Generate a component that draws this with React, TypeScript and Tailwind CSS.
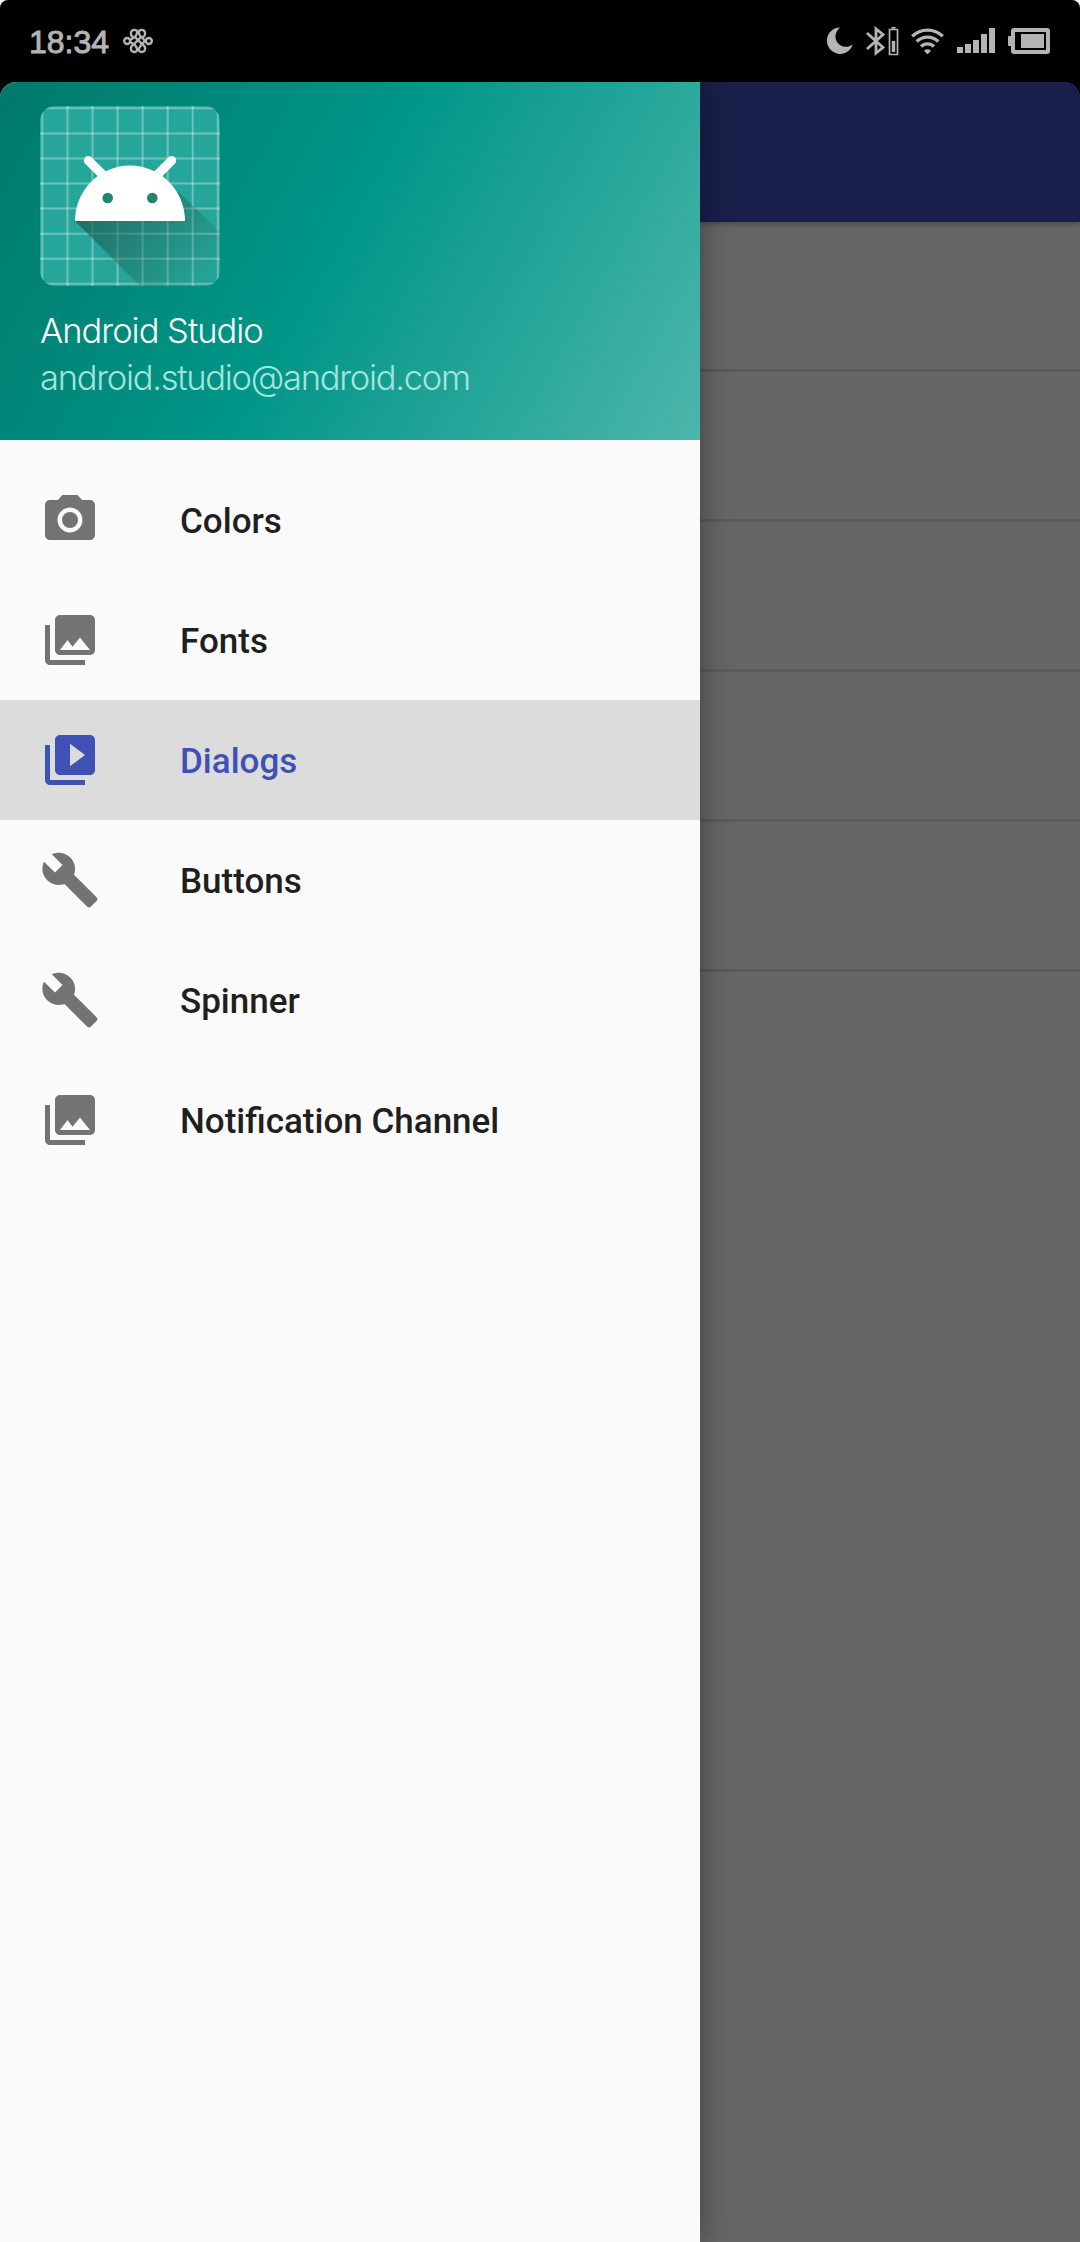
import React from "react";

type IconProps = { className?: string };

function Camera({ className }: IconProps) {
  return (
    <svg viewBox="0 0 24 24" fill="currentColor" className={className}>
      <circle cx="12" cy="12" r="3.2" />
      <path d="M9 2L7.170 4H4c-1.100 0-2 .9-2 2v12c0 1.100.9 2 2 2h16c1.100 0 2-.9 2-2V6c0-1.100-.9-2-2-2h-3.170L15 2H9zm3 15c-2.760 0-5-2.240-5-5s2.240-5 5-5 5 2.240 5 5-2.240 5-5 5z" />
    </svg>
  );
}

function Gallery({ className }: IconProps) {
  return (
    <svg viewBox="0 0 24 24" fill="currentColor" className={className}>
      <path d="M22 16V4c0-1.100-.9-2-2-2H8c-1.100 0-2 .9-2 2v12c0 1.100.9 2 2 2h12c1.100 0 2-.9 2-2zm-11-4l2.030 2.710L16 11l4 5H8l3-4zM2 6v14c0 1.100.9 2 2 2h14v-2H4V6H2z" />
    </svg>
  );
}

function Slideshow({ className }: IconProps) {
  return (
    <svg viewBox="0 0 24 24" fill="currentColor" className={className}>
      <path d="M4 6H2v14c0 1.100.9 2 2 2h14v-2H4V6zm16-4H8c-1.100 0-2 .9-2 2v12c0 1.100.9 2 2 2h12c1.100 0 2-.9 2-2V4c0-1.100-.9-2-2-2zm-8 12.500v-9l6 4.500-6 4.500z" />
    </svg>
  );
}

function Wrench({ className }: IconProps) {
  return (
    <svg viewBox="0 0 24 24" fill="currentColor" className={className}>
      <path d="M22.700 19l-9.100-9.100c.9-2.300.4-5-1.500-6.900-2-2-5-2.400-7.400-1.300L9 6 6 9 1.600 4.700C.4 7.100.9 10.100 2.900 12.100c1.900 1.900 4.600 2.400 6.900 1.500l9.100 9.100c.4.4 1 .4 1.400 0l2.300-2.300c.5-.4.5-1.100.1-1.400z" />
    </svg>
  );
}

function StatusBar() {
  return (
    <header className="flex h-[82px] shrink-0 items-center rounded-t-[8px] bg-black pl-[29px] pr-[30px] text-[#b4b4b4]">
      <span className="w-[94px] whitespace-nowrap pt-[2px] font-['Liberation_Sans',sans-serif] text-[32px] leading-none [-webkit-text-stroke:0.9px_#b4b4b4]">
        18:34
      </span>
      <svg width="30" height="26" viewBox="0 0 30 26" fill="none" stroke="currentColor" strokeWidth="2.400">
        <circle cx="4.200" cy="13" r="3" />
        <circle cx="25.800" cy="13" r="3" />
        <path d="M7 12L11 9.500C8.500 8.500 7.500 7 8 4.500C8.800 1 13.800 1.200 14.200 4C14.400 6 13 7.500 12 9L19 16C21.500 17.500 22.500 19 22 21.500C21 25 16 24.500 15.800 21.500C15.800 19.500 17.500 18 18.500 16.500L23 12" />
        <path d="M23 14L19 9.500C21.500 8.500 22.500 7 22 4.500C21.200 1 16.200 1.200 15.800 4C15.600 6 17 7.500 18 9L11 16C8.500 17.500 7.500 19 8 21.500C9 25 14 24.500 14.200 21.500C14.200 19.500 12.500 18 11.500 16.500L7 14" />
      </svg>
      <div className="ml-auto flex items-center">
        <svg width="27" height="28" viewBox="0 0 27 28" fill="currentColor" className="mr-[12px]">
          <path d="M14 0.500A13.200 13.200 0 1 0 26.700 17.500C21 21.500 14 20 11 15C8 10 9.500 4.500 14 0.500Z" />
        </svg>
        <svg width="34" height="30" viewBox="0 0 34 30" fill="none" stroke="currentColor" className="mr-[12px]">
          <path d="M2 7L18 21.500L11 27V3L18 8.500L2 23" strokeWidth="2.800" />
          <path d="M24.500 3.500H32.500V28.500H24.500Z" strokeWidth="1.700" />
          <path d="M26.500 1.800H30.500" strokeWidth="1.800" />
          <path d="M28.500 15V26" strokeWidth="3.400" />
        </svg>
        <svg width="33" height="27" viewBox="0 0 33 27" fill="none" stroke="currentColor" strokeWidth="3.300" className="mr-[13px]">
          <path d="M1.200 8.300A22 22 0 0 1 31.800 8.300" />
          <path d="M5.700 13.500A15.500 15.500 0 0 1 27.300 13.500" />
          <path d="M10 18.500A9.300 9.300 0 0 1 23 18.500" />
          <path d="M13 22.800A5 5 0 0 1 20 22.800L16.500 26.500Z" fill="currentColor" stroke="none" />
        </svg>
        <svg width="38" height="26" viewBox="0 0 38 26" fill="currentColor" className="mr-[13px]">
          <rect x="0" y="19" width="6" height="6" />
          <rect x="8" y="16" width="6" height="9" />
          <rect x="16" y="12" width="6" height="13" />
          <rect x="24" y="6" width="6" height="19" />
          <rect x="32" y="0" width="6" height="25" />
        </svg>
        <svg width="42" height="26" viewBox="0 0 42 26">
          <rect x="5" y="2" width="35" height="22" rx="1" fill="none" stroke="currentColor" strokeWidth="4" />
          <rect x="0" y="8" width="5" height="10" rx="1" fill="currentColor" />
          <rect x="13" y="6" width="23" height="14" fill="currentColor" />
        </svg>
      </div>
    </header>
  );
}

const gridX = [2.3, 27.5, 52.5, 77.6, 102.6, 127.7, 152.7, 177.8];

function AndroidLogo() {
  return (
    <svg width="180" height="180" viewBox="0 0 180 180" className="block">
      <defs>
        <clipPath id="tile">
          <rect width="180" height="180" rx="15" />
        </clipPath>
        <linearGradient id="cast" gradientUnits="userSpaceOnUse" x1="55" y1="85" x2="160" y2="178">
          <stop offset="0" stopColor="#1c5a50" stopOpacity="0.75" />
          <stop offset="1" stopColor="#1c5a50" stopOpacity="0.05" />
        </linearGradient>
      </defs>
      <g clipPath="url(#tile)">
        <rect width="180" height="180" fill="#26a69a" />
        <g stroke="#ffffff" strokeOpacity="0.33" strokeWidth="2">
          {gridX.map((v) => (
            <React.Fragment key={v}>
              <path d={`M${v} 0V180`} />
              <path d={`M0 ${v}H180`} />
            </React.Fragment>
          ))}
        </g>
        <path d="M35 115L100 180H180V126L139 86Z" fill="url(#cast)" />
      </g>
      <path d="M35 115A55 55.500 0 0 1 145 115Z" fill="#ffffff" />
      <path d="M48.300 54.500L66 72M131.700 54.500L114 72" stroke="#ffffff" strokeWidth="9" strokeLinecap="round" />
      <circle cx="67.700" cy="92" r="5.300" fill="#26836f" />
      <circle cx="112.300" cy="92" r="5.300" fill="#26836f" />
    </svg>
  );
}

const items = [
  { label: "Colors", Icon: Camera },
  { label: "Fonts", Icon: Gallery },
  { label: "Dialogs", Icon: Slideshow, selected: true },
  { label: "Buttons", Icon: Wrench },
  { label: "Spinner", Icon: Wrench },
  { label: "Notification Channel", Icon: Gallery },
];

function Drawer() {
  return (
    <aside className="relative z-10 w-[700px] shrink-0 bg-[#fafafa] shadow-[4px_0_26px_rgba(0,0,0,0.32)]">
      <div className="h-[358px] bg-[linear-gradient(119deg,#00796b_0%,#009688_47%,#4db6ac_100%)] pl-10 pt-6">
        <AndroidLogo />
        <p className="mt-[21px] whitespace-nowrap font-['Inter',sans-serif] text-[34.500px] font-light leading-[47px] tracking-[-1px] text-white">
          Android Studio
        </p>
        <p className="whitespace-nowrap font-['Inter',sans-serif] text-[34.500px] font-light leading-[47px] tracking-[-1.270px] text-[#a5e4dc]">
          android.studio@android.com
        </p>
      </div>
      <nav className="pt-5">
        {items.map(({ label, Icon, selected }) => (
          <div
            key={label}
            className={
              selected
                ? "flex h-[120px] items-center bg-[#dcdcdc] pl-10 text-[#3f51b5]"
                : "flex h-[120px] items-center pl-10 text-[#1f1f1f]"
            }
          >
            <Icon className={selected ? "size-[60px]" : "size-[60px] text-[#737373]"} />
            <span className="ml-20 whitespace-nowrap pt-[2px] font-['Roboto',sans-serif] text-[35px] font-medium leading-none">
              {label}
            </span>
          </div>
        ))}
      </nav>
    </aside>
  );
}

function Backdrop() {
  return (
    <main className="flex flex-1 flex-col bg-[#666666]">
      <div className="relative h-[140px] bg-[#191f4a] shadow-[0_1px_6px_rgba(0,0,0,0.4)]" />
      <div className="h-[150px] border-b-[3px] border-[#5b5b5b]" />
      <div className="h-[150px] border-b-[3px] border-[#5b5b5b]" />
      <div className="h-[150px] border-b-[3px] border-[#5b5b5b]" />
      <div className="h-[150px] border-b-[3px] border-[#5b5b5b]" />
      <div className="h-[150px] border-b-[3px] border-[#5b5b5b]" />
    </main>
  );
}

export default function App() {
  return (
    <div className="bg-white">
      <div className="flex h-[2242px] w-[1080px] flex-col overflow-hidden">
        <StatusBar />
        <div className="flex-1 bg-black">
          <div className="flex h-full overflow-hidden rounded-t-[16px]">
            <Drawer />
            <Backdrop />
          </div>
        </div>
      </div>
    </div>
  );
}
